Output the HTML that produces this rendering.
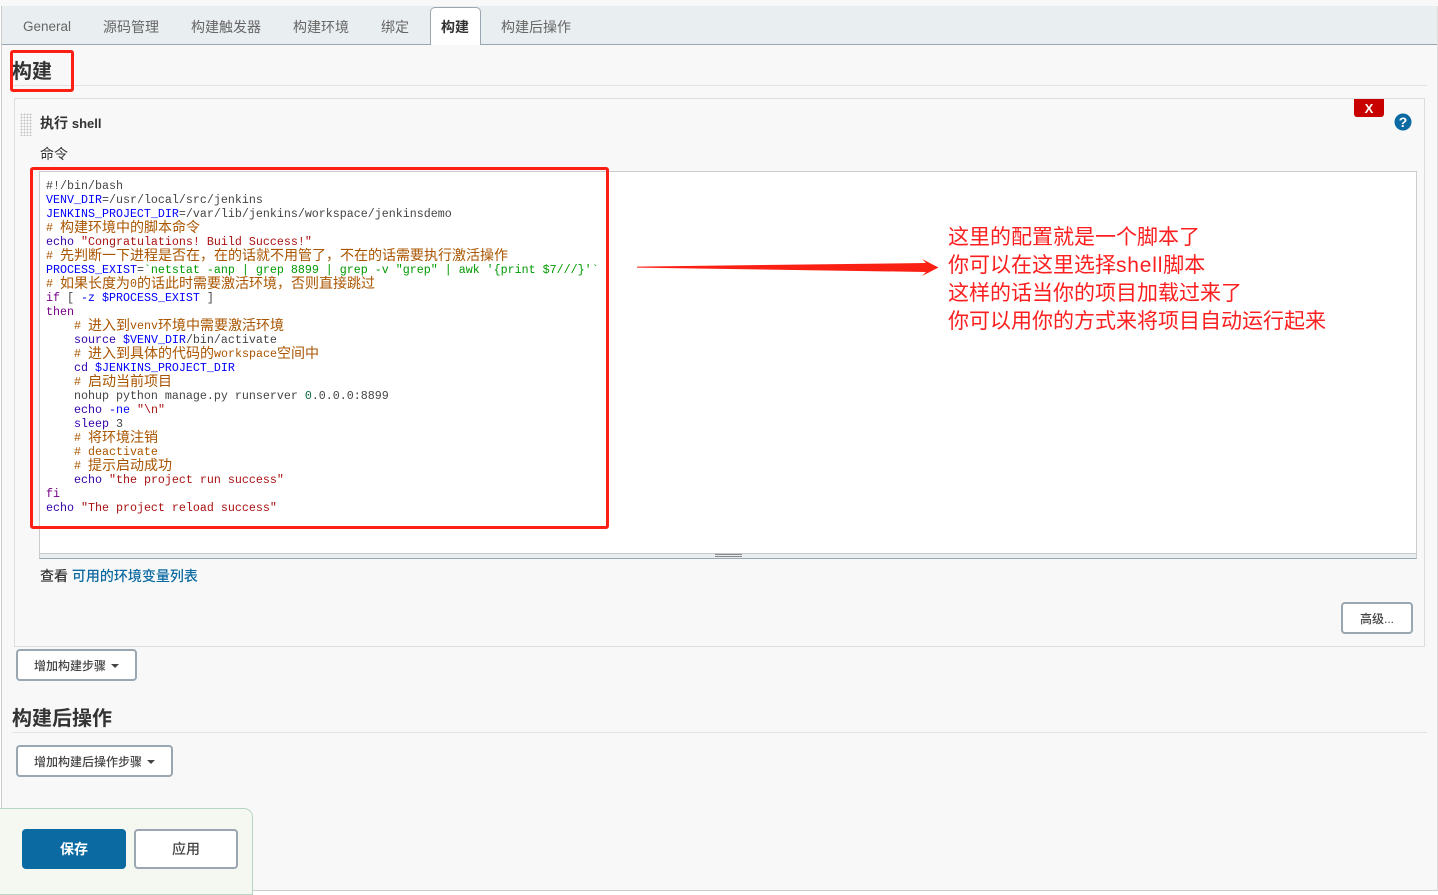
<!DOCTYPE html>
<html lang="zh"><head><meta charset="utf-8"><title>构建</title>
<style>
*{box-sizing:border-box}
html,body{margin:0;padding:0}
body{width:1438px;height:895px;position:relative;overflow:hidden;background:#fff;font-family:"Liberation Sans","Noto Sans CJK SC",sans-serif;color:#333;font-size:14px}
.a{position:absolute}
.t{position:absolute;white-space:nowrap;line-height:20px}
.tab{position:absolute;top:17px;line-height:20px;color:#666;font-size:14px;white-space:nowrap}
.btn{position:absolute;background:#fff;border:2px solid #9aa7b0;border-radius:4px;color:#444;font-size:12px;line-height:30px;white-space:nowrap;font-weight:500}
.caret{display:inline-block;width:0;height:0;border:4px solid transparent;border-top:4px solid #444;border-bottom:0;vertical-align:2px;margin-left:5px}
#code{position:absolute;left:46px;top:179px;font-family:"Liberation Mono","Noto Sans CJK SC",monospace;font-size:11.67px;color:#444}
#code div{height:14px;line-height:14px;white-space:pre}
#code i{font-style:normal;font-size:14px;line-height:0;position:relative;top:1px}
.c{color:#a50}.k{color:#708}.b{color:#30a}.v{color:#00f}.s{color:#a11}.g{color:#090}.n{color:#164}
.note{position:absolute;left:948px;font-size:21px;line-height:28px;color:#fb1f1f;white-space:nowrap}
</style></head>
<body>
<div class="a" style="left:0;top:0;width:1438px;height:6px;background:#f8f8f8"></div>
<div class="a" style="left:1px;top:6px;width:1437px;height:885px;background:#f8f8f8;border-left:1px solid #ccc;border-right:1px solid #ddd;border-bottom:1px solid #ccc"></div>
<div class="a" style="left:2px;top:6px;width:1435px;height:39px;background:#e9eef1;border-bottom:1px solid #9aa7b0"></div>
<span class="tab" style="left:23px;font-size:13.5px">General</span>
<span class="tab" style="left:103px">源码管理</span>
<span class="tab" style="left:191px">构建触发器</span>
<span class="tab" style="left:293px">构建环境</span>
<span class="tab" style="left:381px">绑定</span>
<div class="a" style="left:430px;top:7px;width:51px;height:38px;background:#fff;border:1px solid #9aa7b0;border-bottom:0;border-radius:5px 5px 0 0"></div>
<span class="tab" style="left:441px;color:#333;font-weight:bold">构建</span>
<span class="tab" style="left:501px">构建后操作</span>

<div class="t" style="left:12px;top:58px;font-size:20px;line-height:28px;font-weight:bold">构建</div>
<div class="a" style="left:12px;top:85px;width:1415px;height:1px;background:#e2e2e2"></div>
<div class="a" style="left:10px;top:50px;width:64px;height:42px;border:3px solid #fb1f14;border-radius:3px"></div>

<div class="a" style="left:14px;top:98px;width:1411px;height:549px;border:1px solid #ddd;background:#f8f8f8"></div>
<div class="a" style="left:20px;top:113px;width:12px;height:23px;background-image:radial-gradient(#c4c4c4 1px,transparent 1px);background-size:3px 3px"></div>
<div class="t" style="left:40px;top:113px;font-weight:bold">执行 <span style="font-size:13px">shell</span></div>
<div class="a" style="left:1354px;top:99px;width:30px;height:18px;background:#c80000;border-radius:0 0 3px 3px;color:#fff;font-weight:bold;font-size:13px;line-height:19px;text-align:center">X</div>
<svg class="a" style="left:1394px;top:113px" width="18" height="18" viewBox="0 0 18 18"><circle cx="9" cy="9" r="8.5" fill="#0b6aa2"/><text x="9" y="14" font-family="Liberation Sans" font-size="14" font-weight="bold" fill="#fff" text-anchor="middle">?</text></svg>
<div class="t" style="left:40px;top:144px">命令</div>

<div class="a" style="left:39px;top:171px;width:1378px;height:388px;background:#fff;border:1px solid #ccc;border-bottom:1px solid #9aa7b0"></div>
<div class="a" style="left:40px;top:553px;width:1376px;height:5px;background:#e9eef1;border-top:1px solid #c4c9cc"></div>
<div class="a" style="left:715px;top:554px;width:27px;height:3px;border-top:1px solid #888;border-bottom:1px solid #888"></div>

<div id="code"><div>#!/bin/bash</div>
<div><span class="v">VENV_DIR</span>=/usr/local/src/jenkins</div>
<div><span class="v">JENKINS_PROJECT_DIR</span>=/var/lib/jenkins/workspace/jenkinsdemo</div>
<div class="c"># <i>构建环境中的脚本命令</i></div>
<div><span class="b">echo</span> <span class="s">"Congratulations! Build Success!"</span></div>
<div class="c"># <i>先判断一下进程是否在，在的话就不用管了，不在的话需要执行激活操作</i></div>
<div><span class="v">PROCESS_EXIST</span>=<span class="g">`netstat -anp | grep 8899 | grep -v "grep" | awk '{print $7///}'`</span></div>
<div class="c"># <i>如果长度为</i>0<i>的话此时需要激活环境，否则直接跳过</i></div>
<div><span class="k">if</span> [ <span class="v">-z $PROCESS_EXIST</span> ]</div>
<div class="k">then</div>
<div class="c">    # <i>进入到</i>venv<i>环境中需要激活环境</i></div>
<div>    <span class="b">source</span> <span class="v">$VENV_DIR</span>/bin/activate</div>
<div class="c">    # <i>进入到具体的代码的</i>workspace<i>空间中</i></div>
<div>    <span class="b">cd</span> <span class="v">$JENKINS_PROJECT_DIR</span></div>
<div class="c">    # <i>启动当前项目</i></div>
<div>    nohup python manage.py runserver <span class="n">0</span>.0.0.0:8899</div>
<div>    <span class="b">echo</span> <span class="v">-ne</span> <span class="s">"\n"</span></div>
<div>    <span class="b">sleep</span> 3</div>
<div class="c">    # <i>将环境注销</i></div>
<div class="c">    # deactivate</div>
<div class="c">    # <i>提示启动成功</i></div>
<div>    <span class="b">echo</span> <span class="s">"the project run success"</span></div>
<div class="k">fi</div>
<div><span class="b">echo</span> <span class="s">"The project reload success"</span></div></div>

<div class="a" style="left:30px;top:167px;width:579px;height:362px;border:3px solid #fb1f14;border-radius:3px"></div>

<svg class="a" style="left:630px;top:250px" width="320" height="36" viewBox="630 250 320 36"><polygon points="637,266.6 926,263 922,259 938.5,267.5 922,276 926,272 637,267.6" fill="#fb2014"/></svg>
<div class="note" style="top:224px">这里的配置就是一个脚本了</div>
<div class="note" style="top:252px">你可以在这里选择<span style="letter-spacing:.8px">shell</span>脚本</div>
<div class="note" style="top:280px">这样的话当你的项目加载过来了</div>
<div class="note" style="top:308px">你可以用你的方式来将项目自动运行起来</div>

<div class="t" style="left:40px;top:566px;font-weight:500">查看 <span style="color:#0b6aa2">可用的环境变量列表</span></div>
<div class="btn" style="left:1341px;top:602px;width:72px;height:32px;text-align:center">高级...</div>
<div class="btn" style="left:16px;top:649px;width:121px;height:32px;padding-left:16px">增加构建步骤<span class="caret"></span></div>

<div class="t" style="left:12px;top:705px;font-size:20px;line-height:28px;font-weight:bold">构建后操作</div>
<div class="a" style="left:12px;top:732px;width:1415px;height:1px;background:#e2e2e2"></div>
<div class="btn" style="left:16px;top:745px;width:157px;height:32px;padding-left:16px">增加构建后操作步骤<span class="caret"></span></div>

<div class="a" style="left:0;top:808px;width:253px;height:87px;background:#f4f8f1;border:1px solid #b5d6c4;border-left:0;border-radius:0 9px 0 0"></div>
<div class="a" style="left:22px;top:829px;width:104px;height:40px;background:#0b6aa2;border-radius:4px;color:#fff;font-weight:bold;text-align:center;line-height:40px">保存</div>
<div class="a" style="left:134px;top:829px;width:104px;height:40px;background:#fff;border:2px solid #9aa7b0;border-radius:4px;color:#444;text-align:center;line-height:36px;font-weight:500">应用</div>
</body></html>
